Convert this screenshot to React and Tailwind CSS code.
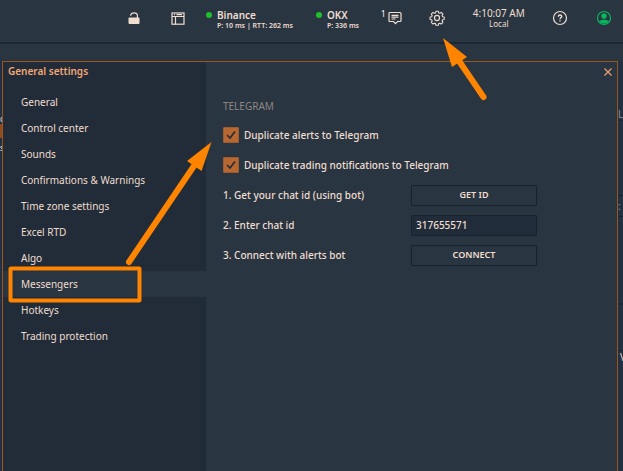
const menu = [
  "General",
  "Control center",
  "Sounds",
  "Confirmations & Warnings",
  "Time zone settings",
  "Excel RTD",
  "Algo",
  "Messengers",
  "Hotkeys",
  "Trading protection",
];

function Exchange({ name, stats }) {
  return (
    <div className="flex gap-[5px]">
      <span className="mt-3 size-1.5 shrink-0 rounded-full bg-[#21bf2f]" />
      <div className="pt-[9px] font-semibold whitespace-nowrap">
        <div className="text-[10px] leading-3">{name}</div>
        <div className="text-[7px] leading-[10px]">{stats}</div>
      </div>
    </div>
  );
}

function LockIcon() {
  return (
    <svg viewBox="0 0 12 12" className="size-3" fill="none">
      <path d="M2.500 3.600C3 1.700 4.300.8 6 .8s3.400 1 3.400 2.800V6" stroke="currentColor" strokeWidth="1.200" />
      <rect x="0.500" y="5.500" width="11" height="6.500" rx="1" fill="currentColor" />
    </svg>
  );
}

function LayoutIcon() {
  return (
    <svg viewBox="0 0 14 13" className="h-[13px] w-3.5" fill="none" stroke="currentColor" strokeWidth="1.200">
      <rect x="1" y="1" width="12" height="11.200" />
      <path d="M1 4.500h12M4.500 4.500v8M3 2.700h1M5.500 2.700H11" />
    </svg>
  );
}

function MessageIcon() {
  return (
    <svg viewBox="0 0 14 14" className="size-3.5" fill="none" stroke="currentColor" strokeWidth="1.200">
      <path d="M2 1.500h10q1 0 1 1v7q0 1-1 1H9.500L7.500 12.700 5.500 10.500H2q-1 0-1-1v-7q0-1 1-1zM3.500 4.400h7M3.500 6.200h7M3.500 8h4" />
    </svg>
  );
}

function GearIcon() {
  return (
    <svg viewBox="0 0 24 24" className="size-4" fill="none" stroke="currentColor" strokeWidth="1.800" strokeLinejoin="round">
      <path d="M10 2h4l.7 2.900 1.700.7 2.500-1.500 2.900 2.900-1.500 2.500.7 1.700 2.900.7v4l-2.900.7-.7 1.700 1.500 2.500-2.900 2.900-2.500-1.500-1.700.7-.7 2.900h-4l-.7-2.900-1.700-.7-2.500 1.500-2.900-2.900 1.500-2.500-.7-1.700L.1 15.900v-4l2.900-.7.7-1.700L2.200 7l2.900-2.900 2.500 1.500 1.700-.7z" transform="translate(1.500 0) scale(.89)" />
      <circle cx="12" cy="12" r="3.800" />
    </svg>
  );
}

function HelpIcon() {
  return (
    <svg viewBox="0 0 16 16" className="size-4" fill="none" stroke="currentColor" strokeWidth="1.200">
      <circle cx="8" cy="8" r="6.500" />
      <path d="M6.300 6.700C6.300 4.300 9.700 4.500 9.700 6.500 9.700 7.700 8 7.700 8 9.200M8 10.200v1.400" strokeWidth="1.400" />
    </svg>
  );
}

function UserIcon() {
  return (
    <svg viewBox="0 0 16 16" className="size-4">
      <circle cx="8" cy="8" r="6.500" fill="none" stroke="#05b85c" strokeWidth="1.200" />
      <circle cx="8" cy="6" r="2.700" fill="#05b85c" />
      <path d="M3.300 11.500C4.300 9 11.700 9 12.700 11.500 10.500 14.500 5.500 14.500 3.300 11.500z" fill="#05b85c" />
    </svg>
  );
}

function CheckRow({ label }) {
  return (
    <label className="flex h-[30px] items-center gap-[5px]">
      <span className="grid size-4 shrink-0 place-items-center">
        <input type="checkbox" defaultChecked className="peer col-start-1 row-start-1 size-4 appearance-none rounded-[1px] border border-[#9d5c30] bg-[#36404a] checked:bg-[#b86730]" />
        <svg viewBox="0 0 16 16" className="pointer-events-none col-start-1 row-start-1 size-4 opacity-0 peer-checked:opacity-100" fill="none" stroke="#202b38" strokeWidth="1.600">
          <path d="M4 8l3 3 5-6.500" />
        </svg>
      </span>
      {label}
    </label>
  );
}

function FieldRow({ children }) {
  return <div className="flex h-[30px] items-center">{children}</div>;
}

function LeftBackdrop() {
  return (
    <div className="flex w-0.5 shrink-0 flex-col overflow-hidden pt-[52px] text-[8px] leading-3">
      <span className="h-[11px]">c</span>
      <span className="h-3.5 bg-[#8f4b20]" />
      <span className="mt-1">s</span>
    </div>
  );
}

function RightBackdrop() {
  return (
    <div className="flex w-[5px] shrink-0 flex-col overflow-hidden text-[10px] leading-3 text-[#8b8f93]">
      <span className="mt-[47px] border-b border-[#1b2733]">L</span>
      <span className="mt-[74px] border-y border-[#17222c] py-1">:</span>
      <span className="mt-[86px] border-t-2 border-[#1b2733]" />
      <span className="mt-[45px] border-t border-[#1b2733] pl-0.5 text-[#e5d8ce]">V</span>
    </div>
  );
}

const control = "h-[21px] w-[126px] rounded-[1px] border border-[#17222c] text-[#f3ddd0]";

export default function App() {
  return (
    <div
      className="relative flex h-screen flex-col overflow-hidden bg-[#243040] text-[10px] text-[#f0ddd0]"
      style={{ fontFamily: '"Noto Sans", sans-serif' }}
    >
      <header className="flex h-11 shrink-0 border-b-2 border-[#1b2733] bg-[#293541]">
        <div className="flex w-[206px] shrink-0 items-center pb-1.5 pl-32">
          <button aria-label="Unlock" className="mr-[31px]"><LockIcon /></button>
          <button aria-label="Layout"><LayoutIcon /></button>
        </div>
        <div className="w-[110px] shrink-0"><Exchange name="Binance" stats="P: 10 ms | RTT: 262 ms" /></div>
        <div className="w-[65px] shrink-0"><Exchange name="OKX" stats="P: 336 ms" /></div>
        <div className="flex grow items-center justify-between pr-[11px] pb-1.5">
          <button aria-label="Messages" className="flex gap-0.5">
            <span className="text-[8px] leading-[6px] text-white">1</span>
            <MessageIcon />
          </button>
          <button aria-label="Settings"><GearIcon /></button>
          <div className="text-center">
            <div className="text-[10px] leading-3">4:10:07 AM</div>
            <div className="text-[8px] leading-[10px]">Local</div>
          </div>
          <button aria-label="Help"><HelpIcon /></button>
          <button aria-label="Account"><UserIcon /></button>
        </div>
      </header>
      <div className="h-[17px] shrink-0 bg-[#293541]" />
      <div className="flex min-h-0 grow">
        <LeftBackdrop />
        <main className="flex grow border-x border-t border-[#99561f] bg-[#293541]">
          <aside className="w-[203px] shrink-0 bg-[#212c38]">
            <h1 className="h-[27px] pl-[5px] text-[10px] leading-[19px] font-semibold text-[#f5a774]">General settings</h1>
            <nav>
              {menu.map((item) => (
                <a
                  key={item}
                  href="#"
                  className={item === "Messengers" ? "block h-[26px] bg-[#293541] pl-[18px] leading-[26px]" : "block h-[26px] pl-[18px] leading-[26px]"}
                >
                  {item}
                </a>
              ))}
            </nav>
          </aside>
          <section className="grow pl-[17px] font-medium">
            <div className="flex h-[35px] justify-end pt-1.5 pr-[5px]">
              <button aria-label="Close" className="size-2 text-[#f0a070]">
                <svg viewBox="0 0 8 8" className="size-2" stroke="currentColor" strokeWidth="1.200">
                  <path d="M.5.5l7 7M7.500.5l-7 7" />
                </svg>
              </button>
            </div>
            <h2 className="h-[23px] text-[10px] leading-[18px] font-normal text-[#8c8782]">TELEGRAM</h2>
            <CheckRow label="Duplicate alerts to Telegram" />
            <CheckRow label="Duplicate trading notifications to Telegram" />
            <FieldRow>
              <span className="w-[188px]">1. Get your chat id (using bot)</span>
              <button className={`${control} text-[9px] font-semibold`}>GET ID</button>
            </FieldRow>
            <FieldRow>
              <label htmlFor="chat-id" className="w-[188px]">2. Enter chat id</label>
              <input id="chat-id" defaultValue="317655571" className={`${control} bg-[#202c39] px-1`} />
            </FieldRow>
            <FieldRow>
              <span className="w-[188px]">3. Connect with alerts bot</span>
              <button className={`${control} text-[9px] font-semibold`}>CONNECT</button>
            </FieldRow>
          </section>
        </main>
        <RightBackdrop />
      </div>
      <svg width="623" height="471" className="pointer-events-none absolute top-0 left-0" fill="none" stroke="#ff8400">
        <rect x="10.500" y="268.500" width="129" height="32" rx="0.500" strokeWidth="4" />
        <path d="M129 262L198 160M483.500 97L457 58" strokeWidth="6" strokeLinecap="round" />
        <path d="M211.500 142L187 161 201.500 171zM443 38L467 57 452 67z" fill="#ff8400" stroke="none" />
      </svg>
    </div>
  );
}
